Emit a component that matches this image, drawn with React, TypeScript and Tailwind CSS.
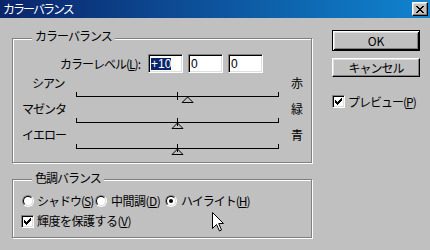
import React from "react";

const JP = "font-['Noto_Sans_CJK_JP','Noto_Sans_CJK_SC',sans-serif]";

function U({ c }: { c: string }) {
  return <span className="underline decoration-1 underline-offset-[1px]">{c}</span>;
}

function Check() {
  return (
    <svg width="7" height="7" viewBox="0 0 7 7" shapeRendering="crispEdges" className="block">
      <path
        d="M6 0h1v1h-1z M5 1h2v1h-2z M0 2h1v1h-1z M4 2h3v1h-3z M0 3h2v1h-2z M3 3h3v1h-3z M0 4h5v1h-5z M1 5h3v1h-3z M2 6h1v1h-1z"
        fill="#000"
      />
    </svg>
  );
}

function Checkbox({ checked }: { checked: boolean }) {
  return (
    <div className="w-[13px] h-[13px] shrink-0 bg-white border border-t-[#808080] border-l-[#808080] border-b-white border-r-white shadow-[inset_1px_1px_0_#000,inset_-1px_-1px_0_#dfdfdf] flex items-center justify-center">
      {checked && <Check />}
    </div>
  );
}

function Radio({ checked }: { checked: boolean }) {
  return (
    <div className="w-[12px] h-[12px] shrink-0 rounded-full border border-t-[#808080] border-l-[#808080] border-b-white border-r-white">
      <div className="w-full h-full rounded-full border border-t-black border-l-black border-b-[#dfdfdf] border-r-[#dfdfdf] bg-white flex items-center justify-center">
        {checked && <div className="w-[4px] h-[4px] rounded-full bg-black" />}
      </div>
    </div>
  );
}

function Field({ children }: { children: React.ReactNode }) {
  return (
    <div className="w-[35px] h-[19px] bg-white border border-t-[#808080] border-l-[#808080] border-b-white border-r-white shadow-[inset_1px_1px_0_#000,inset_-1px_-1px_0_#dfdfdf] pl-[2px] flex items-center font-['Liberation_Sans',sans-serif] text-[12px] leading-[12px]">
      {children}
    </div>
  );
}

function Track({ value }: { value: number }) {
  const cx = 101.5 + value * 1.01;
  return (
    <svg width="204" height="14" className="block ml-[63px]">
      <path
        d={`M${cx} 7L${cx + 5.5} 12.5L${cx - 5.5} 12.5Z`}
        fill="#c0c0c0"
        stroke="#000"
      />
      <path
        d="M0.5 2V6.5H202.5V2M101.5 2V10"
        fill="none"
        stroke="#000"
        shapeRendering="crispEdges"
      />
    </svg>
  );
}

function SliderBlock({
  left,
  right,
  value,
  padClass,
}: {
  left: string;
  right: string;
  value: number;
  padClass: string;
}) {
  return (
    <div className="h-[26px]">
      <div className={`flex justify-between h-[14px] leading-[14px] pr-[8px] ${padClass}`}>
        <span className="tracking-[-1px]">{left}</span>
        <span>{right}</span>
      </div>
      <Track value={value} />
    </div>
  );
}

export default function App() {
  return (
    <div className={`relative w-[430px] h-[250px] overflow-hidden bg-[#c0c0c0] text-black text-[12px] ${JP}`}>
      {/* Title bar */}
      <div className="h-[18px] flex items-center justify-between pl-[3px] pr-[2px] bg-[linear-gradient(to_right,#0a246a,#1084d0)]">
        <span className="text-white text-[12px] leading-[14px] tracking-[-2px]">カラーバランス</span>
        <div className="w-[16px] h-[14px] bg-[#c0c0c0] border border-t-white border-l-white border-b-black border-r-black shadow-[inset_-1px_-1px_0_#808080,inset_1px_1px_0_#dfdfdf] flex items-center justify-center">
          <svg width="8" height="7" viewBox="0 0 8 7" shapeRendering="crispEdges" className="block">
            <path
              d="M0 0h2v1h-2z M6 0h2v1h-2z M1 1h2v1h-2z M5 1h2v1h-2z M2 2h4v1h-4z M3 3h2v1h-2z M2 4h4v1h-4z M1 5h2v1h-2z M5 5h2v1h-2z M0 6h2v1h-2z M6 6h2v1h-2z"
              fill="#000"
            />
          </svg>
        </div>
      </div>

      {/* Body */}
      <div className="flex items-start pl-[12px]">
        {/* Left column */}
        <div className="w-[300px] mt-[20px]">
          {/* Group 1 */}
          <div className="relative w-[300px] h-[125px] border border-[#808080] shadow-[1px_1px_0_#fff,inset_1px_1px_0_#fff]">
            <span className="absolute left-[19px] top-[-10px] bg-[#c0c0c0] px-[3px] leading-[14px] tracking-[-1px]">
              カラーバランス
            </span>
            <div className="pt-[15px]">
              <div className="flex items-center h-[19px] pl-[47px]">
                <span className="leading-[14px] tracking-[-1px] mr-[8px]">
                  カラーレベル(<U c="L" />):
                </span>
                <div className="flex gap-[5px]">
                  <Field>
                    <span className="bg-[#0a246a] text-white inline-block leading-[12px] pr-[0px]">+10</span>
                  </Field>
                  <Field>0</Field>
                  <Field>0</Field>
                </div>
              </div>
              <div className="mt-[3px]">
                <SliderBlock left="シアン" right="赤" value={10} padClass="pl-[19px]" />
                <SliderBlock left="マゼンタ" right="緑" value={0} padClass="pl-[9px]" />
                <SliderBlock left="イエロー" right="青" value={0} padClass="pl-[9px]" />
              </div>
            </div>
          </div>

          {/* Group 2 */}
          <div className="relative w-[300px] h-[59px] mt-[16px] border border-[#808080] shadow-[1px_1px_0_#fff,inset_1px_1px_0_#fff]">
            <span className="absolute left-[19px] top-[-9px] bg-[#c0c0c0] px-[3px] leading-[14px] tracking-[-1px]">
              色調バランス
            </span>
            <div className="pt-[14px]">
              <div className="flex items-center h-[14px] pl-[9px]">
                <div className="w-[73px] flex items-center gap-[3px]">
                  <Radio checked={false} />
                  <span className="leading-[14px] tracking-[-1px] whitespace-nowrap">
                    シャドウ(<U c="S" />)
                  </span>
                </div>
                <div className="w-[70px] flex items-center gap-[4px]">
                  <Radio checked={false} />
                  <span className="leading-[14px] whitespace-nowrap tracking-[-0.5px]">
                    中間調(<U c="D" />)
                  </span>
                </div>
                <div className="flex items-center gap-[4px]">
                  <Radio checked={true} />
                  <span className="leading-[14px] tracking-[-1px] whitespace-nowrap">
                    ハイライト(<U c="H" />)
                  </span>
                </div>
              </div>
              <div className="flex items-center h-[14px] mt-[6px] pl-[8px] gap-[3px]">
                <Checkbox checked={true} />
                <span className="leading-[14px] tracking-[-0.5px] whitespace-nowrap">
                  輝度を保護する(<U c="V" />)
                </span>
              </div>
            </div>
          </div>
        </div>

        {/* Right column */}
        <div className="ml-[20px] mt-[12px] w-[88px] flex flex-col">
          <button className="w-[88px] h-[21px] bg-[#c0c0c0] border border-black shadow-[inset_1px_1px_0_#fff,inset_-1px_-1px_0_#000,inset_2px_2px_0_#dfdfdf,inset_-2px_-2px_0_#808080] flex items-center justify-center leading-[14px]">
            OK
          </button>
          <button className="mt-[7px] w-[88px] h-[19px] bg-[#c0c0c0] border border-t-white border-l-white border-b-black border-r-black shadow-[inset_-1px_-1px_0_#808080,inset_1px_1px_0_#dfdfdf] flex items-center justify-center leading-[14px] tracking-[-1px]">
            キャンセル
          </button>
          <div className="mt-[18px] flex items-center gap-[3px] h-[13px]">
            <Checkbox checked={true} />
            <span className="leading-[14px] tracking-[-1px] whitespace-nowrap">
              プレビュー(<U c="P" />)
            </span>
          </div>
        </div>
      </div>

      {/* Mouse cursor */}
      <svg
        width="13"
        height="21"
        viewBox="0 0 13 21"
        className="absolute left-[212px] top-[212px]"
      >
        <path
          d="M0.5 0.5V16.5L4.5 12.5L7.5 19L9.5 18L6.7 11.5H11.5Z"
          fill="#fff"
          stroke="#000"
          strokeLinejoin="miter"
        />
      </svg>
    </div>
  );
}
